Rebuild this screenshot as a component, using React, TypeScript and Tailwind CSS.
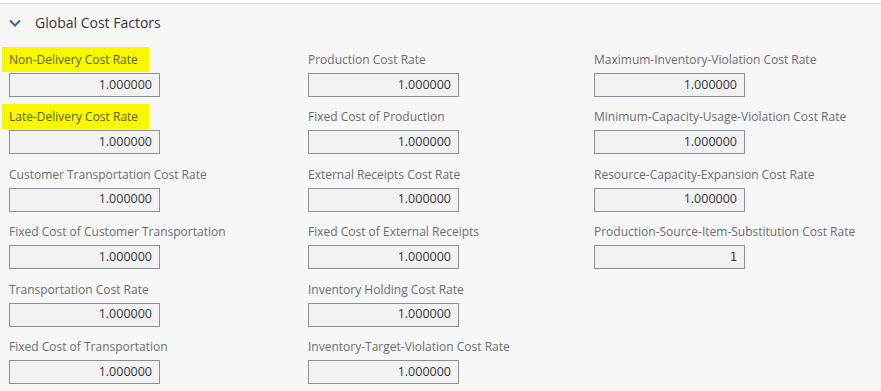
import React from "react";

type F = { label: string; value: string; hl?: boolean; mono?: boolean };

const col1: F[] = [
  { label: "Non-Delivery Cost Rate", value: "1.000000", hl: true },
  { label: "Late-Delivery Cost Rate", value: "1.000000", hl: true },
  { label: "Customer Transportation Cost Rate", value: "1.000000" },
  { label: "Fixed Cost of Customer Transportation", value: "1.000000" },
  { label: "Transportation Cost Rate", value: "1.000000" },
  { label: "Fixed Cost of Transportation", value: "1.000000" },
];
const col2: F[] = [
  { label: "Production Cost Rate", value: "1.000000" },
  { label: "Fixed Cost of Production", value: "1.000000" },
  { label: "External Receipts Cost Rate", value: "1.000000" },
  { label: "Fixed Cost of External Receipts", value: "1.000000" },
  { label: "Inventory Holding Cost Rate", value: "1.000000" },
  { label: "Inventory-Target-Violation Cost Rate", value: "1.000000" },
];
const col3: F[] = [
  { label: "Maximum-Inventory-Violation Cost Rate", value: "1.000000" },
  { label: "Minimum-Capacity-Usage-Violation Cost Rate", value: "1.000000" },
  { label: "Resource-Capacity-Expansion Cost Rate", value: "1.000000" },
  { label: "Production-Source-Item-Substitution Cost Rate", value: "1", mono: true },
];

function Field({ f }: { f: F }) {
  return (
    <div className="flex flex-col">
      <div className="h-[16px] leading-[16px] text-[12px] text-[#6a6d70] whitespace-nowrap">
        {f.hl ? (
          <span className="bg-[#f8f800] -ml-[7px] pl-[7px] pr-[11px] py-[4px] text-[#5f6200]">
            {f.label}
          </span>
        ) : (
          f.label
        )}
      </div>
      <div className="mt-[5px] w-[151px] h-[24px] border border-[#89919a] bg-[#f2f2f2] flex items-center justify-end pr-[7px] text-[12.5px] text-[#32363a]">
        <span
          className={f.mono ? "font-['DejaVu_Sans_Mono',monospace] text-[12px]" : ""}
        >
          {f.value}
        </span>
      </div>
    </div>
  );
}

function Column({ items }: { items: F[] }) {
  return (
    <div className="flex flex-col gap-y-[12.4px]">
      {items.map((f) => (
        <Field key={f.label} f={f} />
      ))}
    </div>
  );
}

export default function App() {
  return (
    <div className="w-[881px] h-[391px] overflow-hidden bg-[#f7f7f7] font-['Open_Sans','Liberation_Sans',sans-serif]">
      <div className="h-[3px] bg-white" />
      <div className="h-px bg-[#d9d9d9]" />
      <div className="h-[37px] flex items-center pl-[9px]">
        <svg width="12" height="8" viewBox="0 0 12 8" className="mt-[1px]">
          <path d="M1 1.5 L6 6.5 L11 1.5" fill="none" stroke="#2e6aaa" strokeWidth="2" />
        </svg>
        <span className="ml-[14px] text-[14px] text-[#32363a]">Global Cost Factors</span>
      </div>
      <div className="mt-[11px] grid grid-cols-[299px_286px_1fr] pl-[9px]">
        <Column items={col1} />
        <Column items={col2} />
        <Column items={col3} />
      </div>
    </div>
  );
}
